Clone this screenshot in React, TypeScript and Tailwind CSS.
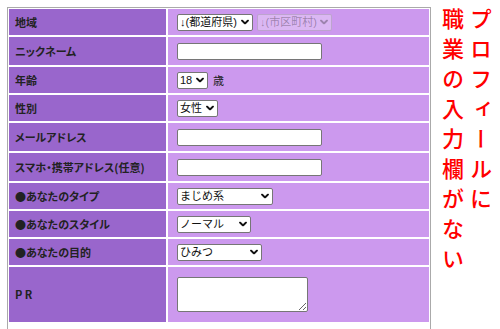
import React from 'react';

type SelectProps = {
  value: string;
  width: string;
  disabled?: boolean;
};

function Chevron({ faded }: { faded?: boolean }) {
  return (
    <svg
      className={`pointer-events-none absolute right-[4px] top-1/2 -translate-y-1/2 ${faded ? 'opacity-30' : ''}`}
      width="8"
      height="5"
      viewBox="0 0 8 5"
      fill="none"
    >
      <path d="M1 1l3 3 3-3" stroke="#111" strokeWidth={1.8} strokeLinecap="round" strokeLinejoin="round" />
    </svg>
  );
}

function Select({ value, width, disabled }: SelectProps) {
  return (
    <span className="relative inline-flex">
      <select
        disabled={disabled}
        defaultValue={value}
        className={`${width} h-[17px] appearance-none rounded-[2px] border pl-[2px] pr-[12px] text-[11px] leading-[15px] ${
          disabled ? 'border-[#767676]/30 bg-white/30 text-black/30' : 'border-[#767676] bg-white text-[#111]'
        }`}
      >
        <option value={value}>{value}</option>
      </select>
      <Chevron faded={disabled} />
    </span>
  );
}

function TextInput() {
  return <input type="text" className="h-[17px] w-[145px] rounded-[2px] border border-[#767676] bg-white px-[2px] text-[11px]" />;
}

function Row({ label, height, children }: { label: string; height: string; children?: React.ReactNode }) {
  return (
    <div className={`grid grid-cols-[157px_261px] gap-[2px] ${height}`}>
      <div className="flex items-center whitespace-pre bg-[#9966cc] pl-[6px] font-['Noto_Sans_CJK_JP',sans-serif] text-[11px] font-bold text-[#222] [font-feature-settings:'palt']">
        {label}
      </div>
      <div className="flex items-center gap-[4px] bg-[#cc99ee] pl-[9px] text-[12px] text-[#222]">{children}</div>
    </div>
  );
}

export default function App() {
  return (
    <div className="flex h-[329px] w-[500px] items-start overflow-hidden bg-white font-['Liberation_Sans','Noto_Sans_CJK_JP',sans-serif]">
      {/* Form table */}
      <div className="ml-[7px] mt-[7px] h-[322px] w-[424px] border-l border-r border-t border-[#aaaaaa] p-[1px]">
        <div className="flex flex-col gap-[2px]">
          <Row label="地域" height="h-[26px]">
            <Select value="↓(都道府県)" width="w-[76px]" />
            <Select value="↓(市区町村)" width="w-[75px]" disabled />
          </Row>
          <Row label="ニックネーム" height="h-[28px]">
            <TextInput />
          </Row>
          <Row label="年齢" height="h-[26px]">
            <Select value="18" width="w-[31px]" />
            <span className="ml-[1px] font-['Noto_Sans_CJK_JP',sans-serif] text-[11px]">歳</span>
          </Row>
          <Row label="性別" height="h-[26px]">
            <Select value="女性" width="w-[41px]" />
          </Row>
          <Row label="メールアドレス" height="h-[28px]">
            <TextInput />
          </Row>
          <Row label="スマホ・携帯アドレス(任意)" height="h-[28px]">
            <TextInput />
          </Row>
          <Row label="●あなたのタイプ" height="h-[26px]">
            <Select value="まじめ系" width="w-[96px]" />
          </Row>
          <Row label="●あなたのスタイル" height="h-[26px]">
            <Select value="ノーマル" width="w-[74px]" />
          </Row>
          <Row label="●あなたの目的" height="h-[26px]">
            <Select value="ひみつ" width="w-[85px]" />
          </Row>
          <Row label="P R" height="h-[55px]">
            <textarea className="h-[35px] w-[131px] rounded-[2px] border border-[#767676] bg-white text-[12px]" />
          </Row>
        </div>
      </div>

      {/* Annotation */}
      <div className="ml-[8px] mt-[8px] h-[300px] font-['Noto_Sans_CJK_JP',sans-serif] text-[22px] font-medium leading-[28px] tracking-[8px] text-[#ff0000] [writing-mode:vertical-rl]">
        プロフィールに
        <br />
        職業の入力欄がない
      </div>
    </div>
  );
}
